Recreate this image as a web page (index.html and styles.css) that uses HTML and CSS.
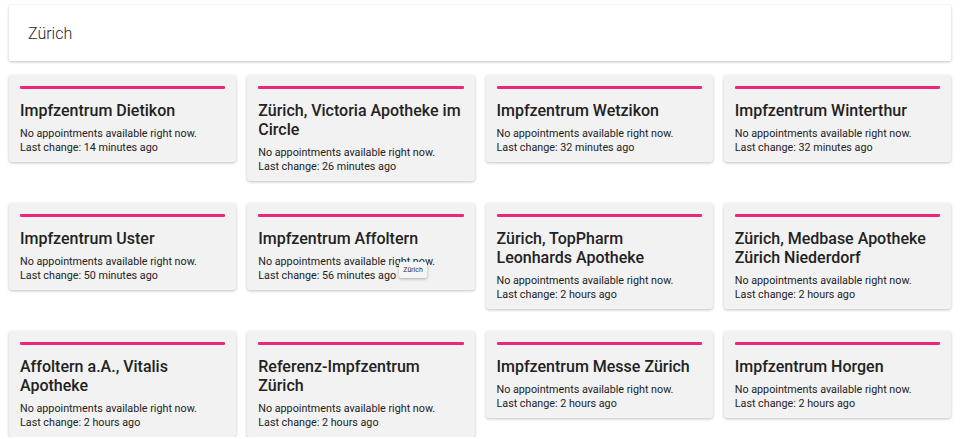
FILE: index.html
```html
<!DOCTYPE html>
<html lang="en">
<head>
  <meta charset="UTF-8">
  <meta name="viewport" content="width=device-width, initial-scale=1.0">
  <title>Impftermine Zürich</title>
  <link rel="stylesheet" href="styles.css">
</head>
<body>
  <div class="page">
    <div class="search">
      <span class="search-text">Zürich</span>
    </div>
    <div class="grid">
      <div class="card">
        <div class="bar"></div>
        <h2>Impfzentrum Dietikon</h2>
        <p>No appointments available right now.<br>Last change: 14 minutes ago</p>
      </div>
      <div class="card">
        <div class="bar"></div>
        <h2>Zürich, Victoria Apotheke im Circle</h2>
        <p>No appointments available right now.<br>Last change: 26 minutes ago</p>
      </div>
      <div class="card">
        <div class="bar"></div>
        <h2>Impfzentrum Wetzikon</h2>
        <p>No appointments available right now.<br>Last change: 32 minutes ago</p>
      </div>
      <div class="card">
        <div class="bar"></div>
        <h2>Impfzentrum Winterthur</h2>
        <p>No appointments available right now.<br>Last change: 32 minutes ago</p>
      </div>
      <div class="card">
        <div class="bar"></div>
        <h2>Impfzentrum Uster</h2>
        <p>No appointments available right now.<br>Last change: 50 minutes ago</p>
      </div>
      <div class="card">
        <div class="bar"></div>
        <h2>Impfzentrum Affoltern</h2>
        <p>No appointments available right now.<br>Last change: 56 minutes ago</p>
        <span class="tooltip">Zürich</span>
      </div>
      <div class="card">
        <div class="bar"></div>
        <h2>Zürich, TopPharm Leonhards Apotheke</h2>
        <p>No appointments available right now.<br>Last change: 2 hours ago</p>
      </div>
      <div class="card">
        <div class="bar"></div>
        <h2>Zürich, Medbase Apotheke Zürich Niederdorf</h2>
        <p>No appointments available right now.<br>Last change: 2 hours ago</p>
      </div>
      <div class="card">
        <div class="bar"></div>
        <h2>Affoltern a.A., Vitalis Apotheke</h2>
        <p>No appointments available right now.<br>Last change: 2 hours ago</p>
      </div>
      <div class="card">
        <div class="bar"></div>
        <h2>Referenz-Impfzentrum Zürich</h2>
        <p>No appointments available right now.<br>Last change: 2 hours ago</p>
      </div>
      <div class="card">
        <div class="bar"></div>
        <h2>Impfzentrum Messe Zürich</h2>
        <p>No appointments available right now.<br>Last change: 2 hours ago</p>
      </div>
      <div class="card">
        <div class="bar"></div>
        <h2>Impfzentrum Horgen</h2>
        <p>No appointments available right now.<br>Last change: 2 hours ago</p>
      </div>
    </div>
  </div>
</body>
</html>
```

FILE: styles.css
```css
body {
  margin: 0;
  font-family: Roboto, "Liberation Sans", sans-serif;
  background: #fff;
  color: #222;
}

.page {
  padding: 5px 9px 0 9px;
}

.search {
  background: #fff;
  height: 56px;
  display: flex;
  align-items: center;
  padding: 0 19px;
  border-radius: 2px;
  box-shadow: 0 1px 3px rgba(0, 0, 0, 0.25);
}

.search-text {
  font-size: 16px;
  font-weight: 300;
  color: #1e1e1e;
}

.grid {
  display: grid;
  grid-template-columns: repeat(4, 1fr);
  column-gap: 11px;
  row-gap: 22px;
  align-items: start;
  margin-top: 14px;
}

.card {
  position: relative;
  background: #f2f2f2;
  border-radius: 3px;
  padding: 11px 11px 8px 11px;
  box-shadow: 0 1px 3px rgba(0, 0, 0, 0.25);
}

.bar {
  height: 3px;
  background: #e8287b;
  border-radius: 1px;
}

.card h2 {
  margin: 12px 0 7px;
  font-size: 16px;
  font-weight: 500;
  line-height: 19px;
  color: #222;
}

.card p {
  margin: 0;
  font-size: 10.75px;
  line-height: 13.5px;
  color: #222;
}

.tooltip {
  position: absolute;
  left: 152px;
  top: 59px;
  padding: 3px 4px;
  font-size: 7px;
  line-height: 10px;
  background: #f5f5f5;
  border-radius: 2px;
  box-shadow: 0 1px 3px rgba(0, 0, 0, 0.3);
  color: #333;
}
```
